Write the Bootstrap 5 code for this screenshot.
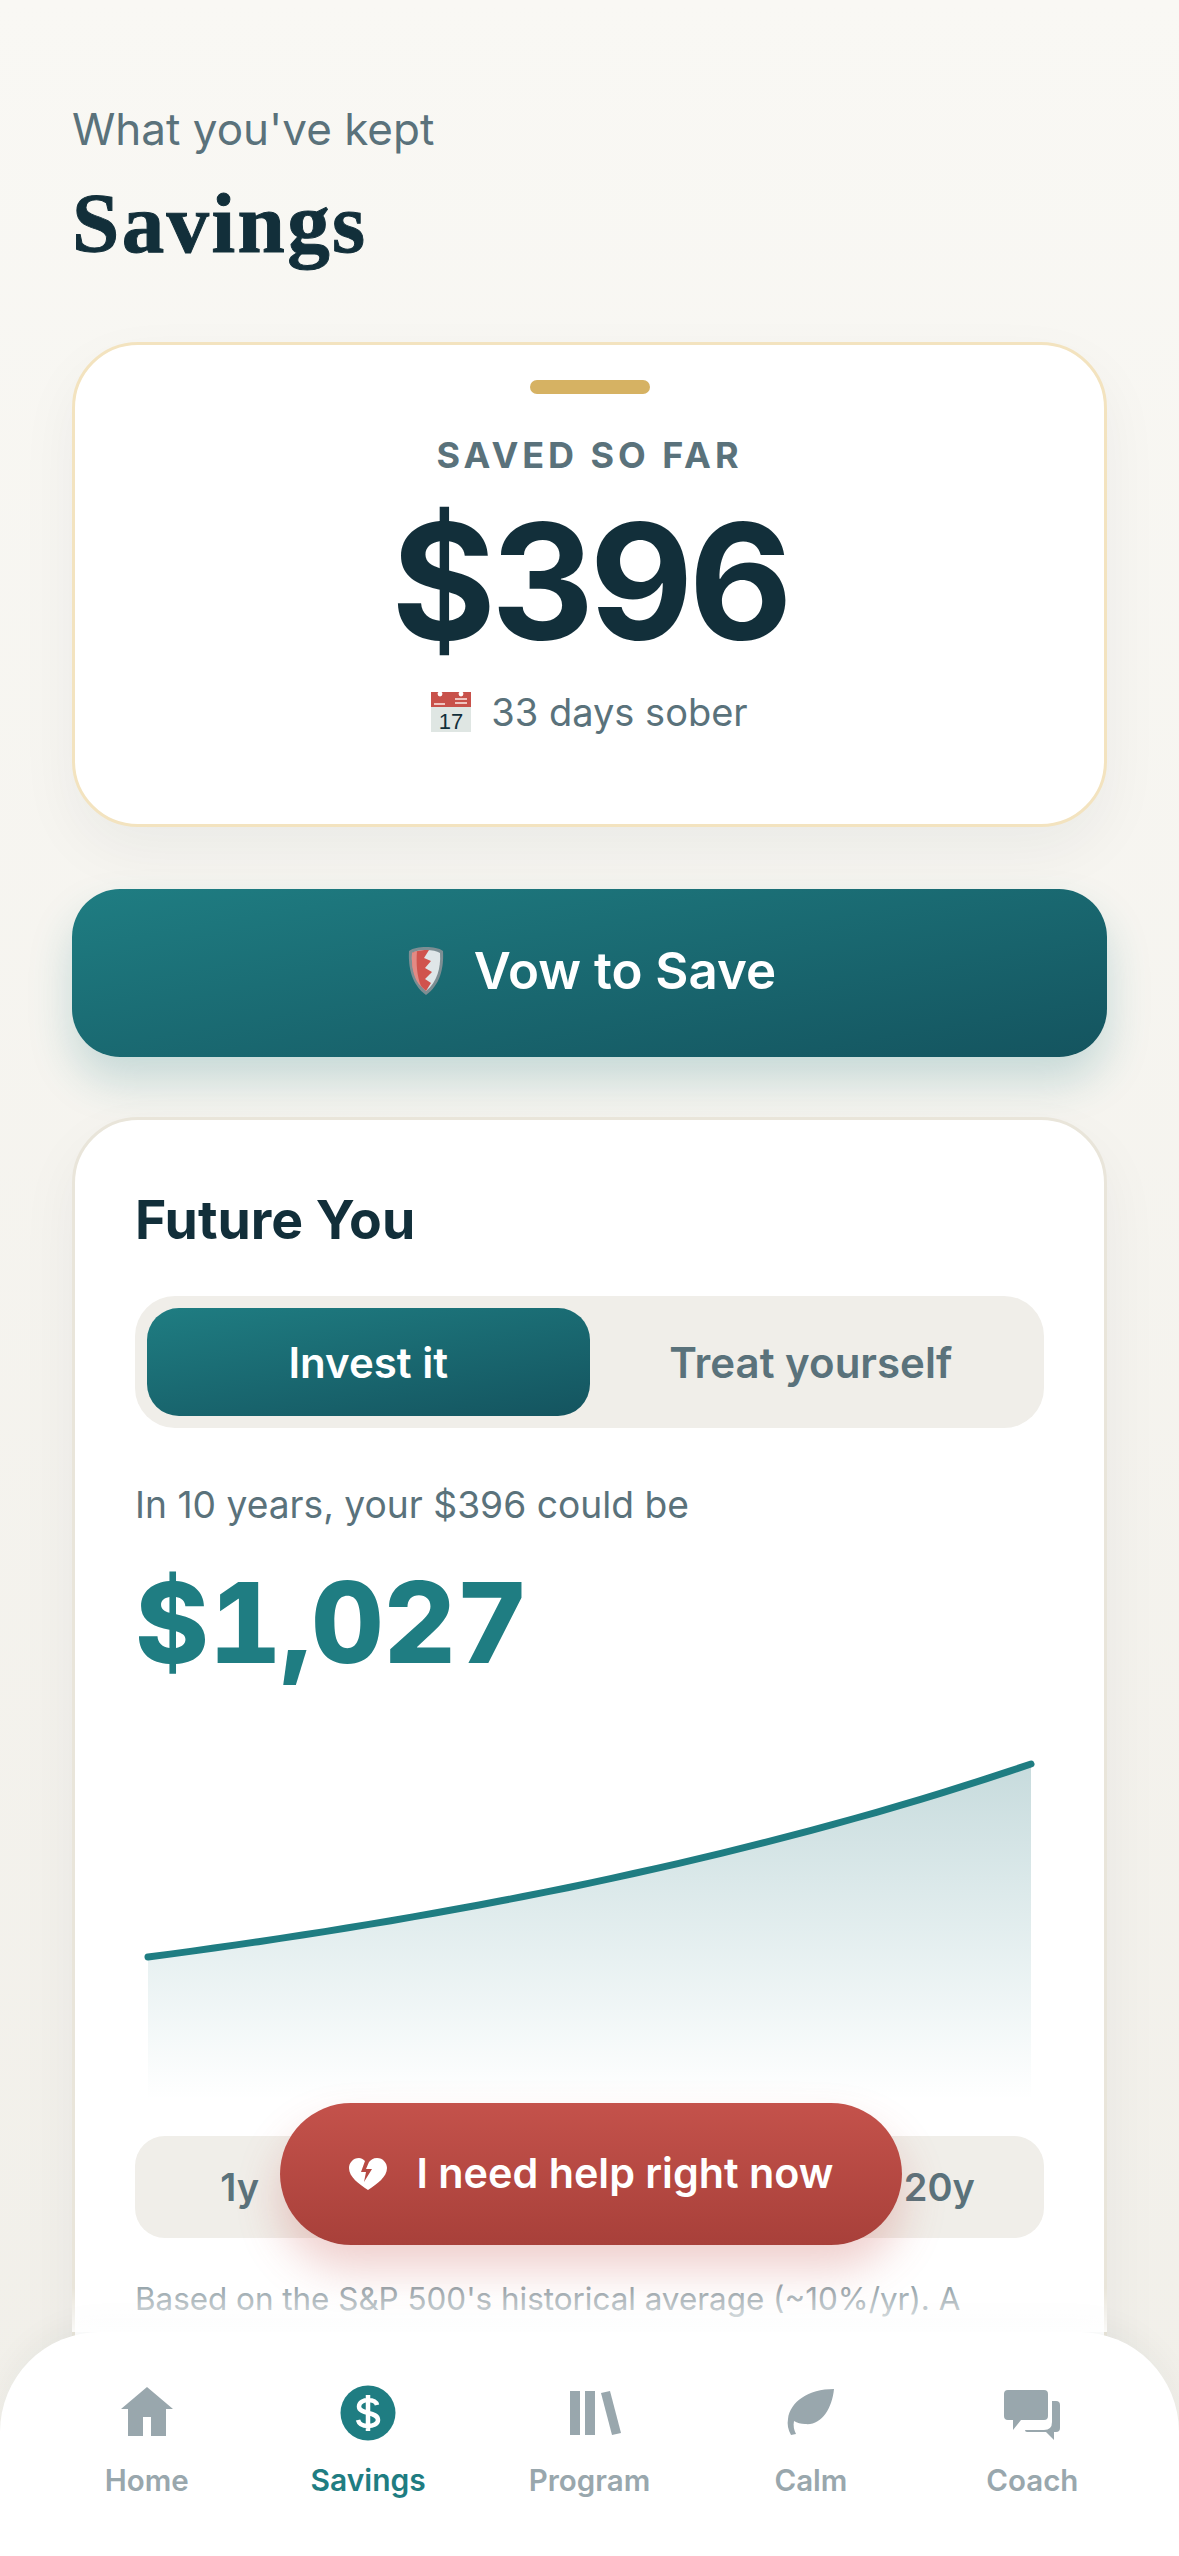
<!DOCTYPE html>
<html lang="en">
<head>
    <meta charset="UTF-8">
    <title>Savings</title>
    <meta name="viewport" content="width=device-width, initial-scale=1">
    <link href="https://cdn.jsdelivr.net/npm/bootstrap@5.3.2/dist/css/bootstrap.min.css" rel="stylesheet">
    <style>
        html, body {
            height: 2556px;
            overflow: hidden;
        }

        body {
            background: linear-gradient(180deg, #f9f8f4 0%, #f1efe9 100%);
            font-family: "Inter", "Liberation Sans", sans-serif;
            color: #122f3a;
        }

        .app-screen {
            position: relative;
            height: 2556px;
            overflow: hidden;
        }

        .page-body {
            padding: 100px 72px 0;
        }

        .eyebrow {
            font-size: 44px;
            line-height: 58px;
            color: #5a727b;
            margin-bottom: 20px;
        }

        .page-title {
            font-family: "Liberation Serif", serif;
            font-weight: 700;
            font-size: 85px;
            line-height: 90px;
            letter-spacing: 2.4px;
            -webkit-text-stroke: 1px #122f3a;
            margin-bottom: 74px;
        }

        .saved-card {
            height: 485px;
            background: #fff;
            border: 3px solid #f3e3bf;
            border-radius: 66px;
            box-shadow: 0 24px 60px rgba(18, 47, 58, .05);
            padding-top: 35px;
            margin-bottom: 62px;
        }

        .gold-handle {
            width: 120px;
            height: 14px;
            border-radius: 7px;
            background: #d6b263;
        }

        .saved-label {
            font-size: 36px;
            line-height: 44px;
            font-weight: 700;
            letter-spacing: .11em;
            color: #5a727b;
            margin-top: 39px;
        }

        .saved-amount {
            font-size: 160px;
            line-height: 180px;
            font-weight: 700;
            letter-spacing: -.03em;
            margin-top: 14px;
        }

        .saved-days {
            font-size: 38px;
            line-height: 50px;
            color: #5a727b;
            gap: 20px;
            margin-top: 16px;
        }

        .vow-btn {
            width: 100%;
            height: 168px;
            border: 0;
            border-radius: 48px;
            padding: 0 0 4px 5px;
            background: linear-gradient(170deg, #1f7d82 0%, #14545f 100%);
            box-shadow: 0 24px 44px rgba(31, 125, 130, .22);
            color: #fff;
            font-size: 51px;
            font-weight: 600;
            gap: 30px;
            margin-bottom: 60px;
        }

        .future-card {
            height: 1500px;
            background: #fff;
            border: 3px solid #e9e5da;
            border-radius: 66px;
            box-shadow: 0 24px 60px rgba(18, 47, 58, .05);
            padding: 68px 60px 0;
        }

        .future-title {
            font-size: 53.500px;
            line-height: 64px;
            font-weight: 700;
            margin-bottom: 44px;
        }

        .mode-toggle {
            height: 132px;
            padding: 12px;
            border-radius: 40px;
            background: #f0eee9;
            margin-bottom: 52px;
        }

        .mode-option {
            flex: 1;
            border-radius: 32px;
            font-size: 42px;
            font-weight: 600;
            color: #5a727b;
        }

        .mode-option.is-on {
            background: linear-gradient(170deg, #1f7d82 0%, #14545f 100%);
            color: #fff;
        }

        .future-caption {
            font-size: 37.200px;
            line-height: 50px;
            color: #5a727b;
            margin-bottom: 27px;
        }

        .future-amount {
            font-size: 112px;
            line-height: 130px;
            font-weight: 800;
            font-variant-numeric: tabular-nums;
            color: #1f7d82;
            margin-bottom: 0;
        }

        .growth-chart {
            display: block;
            width: 908px;
            height: 360px;
            margin-top: 53px;
        }

        .period-row {
            height: 102px;
            border-radius: 30px;
            background: #f0eee9;
            margin-top: 36px;
            margin-bottom: 36px;
        }

        /* the two middle periods sit under the help pill */
        .period-option {
            flex: 1;
            text-align: center;
            font-size: 38px;
            font-weight: 600;
            color: #5a727b;
        }

        .period-option:first-child {
            margin-left: -12px;
        }

        .period-option:last-child {
            margin-right: -12px;
        }

        .foot-note {
            font-size: 31.400px;
            line-height: 50px;
            color: #99a7ad;
            white-space: nowrap;
        }

        .help-pill {
            position: absolute;
            left: 280px;
            top: 2103px;
            width: 622px;
            height: 142px;
            border: 0;
            border-radius: 71px;
            padding-bottom: 6px;
            background: linear-gradient(180deg, #c4524b 0%, #a8403a 100%);
            box-shadow: 0 24px 44px rgba(196, 82, 75, .28);
            color: #fff;
            font-size: 41.300px;
            font-weight: 600;
            gap: 30px;
        }

        .tab-bar {
            position: absolute;
            left: 0;
            right: 0;
            top: 2332px;
            height: 224px;
            background: #fff;
            border-radius: 100px 100px 0 0;
            padding: 51px 36px 0;
            box-shadow: 0 -10px 30px rgba(18, 47, 58, .04);
        }

        .tab-bar::before {
            content: "";
            position: absolute;
            left: 72px;
            right: 72px;
            top: -44px;
            height: 44px;
            background: linear-gradient(180deg, rgba(255, 255, 255, 0), rgba(255, 255, 255, .85));
        }

        .tab-item {
            flex: 1;
            color: #99a7ad;
            font-size: 29.500px;
            font-weight: 600;
        }

        .tab-item.is-on {
            color: #1f7d82;
            font-size: 30px;
        }

        .tab-icon {
            display: block;
            width: 60px;
            height: 60px;
            margin-bottom: 17px;
            fill: currentColor;
            overflow: visible;
        }

        .tab-label {
            line-height: 40px;
        }
    </style>
</head>

<body>

<div class="app-screen">
    <div class="page-body">
        <p class="eyebrow">What you've kept</p>
        <h1 class="page-title">Savings</h1>

        <div class="saved-card d-flex flex-column align-items-center">
            <div class="gold-handle"></div>
            <div class="saved-label">SAVED SO FAR</div>
            <div class="saved-amount">$396</div>
            <div class="saved-days d-flex align-items-center">
                <!-- calendar emoji -->
                <svg width="40" height="40" viewBox="0 0 40 40">
                    <rect width="40" height="40" fill="#dfe6e3"/>
                    <rect width="40" height="15" fill="#c8514a"/>
                    <circle cx="9" cy="2" r="2.4" fill="#fff"/>
                    <circle cx="30" cy="2" r="2.4" fill="#fff"/>
                    <path d="M3 12h11M24 7h12M24 11h12" stroke="#efc4bf" stroke-width="2"/>
                    <text x="20" y="37" text-anchor="middle" font-family="Liberation Sans" font-size="22" fill="#122f3a">17</text>
                </svg>
                <span>33 days sober</span>
            </div>
        </div>

        <button class="vow-btn btn d-flex align-items-center justify-content-center">
            <!-- shield emoji -->
            <svg width="36" height="50" viewBox="0 0 36 50">
                <path d="M18 1 C25 1 31 2 35 5 C36 22 32 39 18 49 C4 39 0 22 1 5 C5 2 11 1 18 1Z" fill="#7d8e93"/>
                <path d="M18 4 C24 4 29 5 32 7 C33 22 29 36 18 45 C7 36 3 22 4 7 C7 5 12 4 18 4Z" fill="#dfe6e8"/>
                <path d="M18 4 C14 4 7 5 4 7 C3 22 7 36 18 45 L23 37 L17 33 L24 26 L17 22 L23 15 L16 12 L21 4Z" fill="#d0534d"/>
                <path d="M4 7 C3 22 7 36 13 40 C9 30 8 18 9 5Z" fill="#e28a84"/>
            </svg>
            <span>Vow to Save</span>
        </button>

        <div class="future-card">
            <h2 class="future-title">Future You</h2>

            <div class="mode-toggle d-flex">
                <div class="mode-option is-on d-flex align-items-center justify-content-center">Invest it</div>
                <div class="mode-option d-flex align-items-center justify-content-center">Treat yourself</div>
            </div>

            <div class="future-caption">In 10 years, your $396 could be</div>
            <div class="future-amount">$1,027</div>

            <svg class="growth-chart" viewBox="0 0 908 360">
                <defs>
                    <linearGradient id="chartFill" x1="0" y1="0" x2="0" y2="1">
                        <stop offset="0" stop-color="#1f6f76" stop-opacity=".25"/>
                        <stop offset="1" stop-color="#1f7d82" stop-opacity="0"/>
                    </linearGradient>
                </defs>
                <path id="chartArea" fill="url(#chartFill)"/>
                <path id="chartLine" fill="none" stroke="#1f7d82" stroke-width="7" stroke-linecap="round"/>
            </svg>

            <div class="period-row d-flex align-items-center">
                <div class="period-option">1y</div>
                <div class="period-option"></div>
                <div class="period-option"></div>
                <div class="period-option">20y</div>
            </div>

            <p class="foot-note">Based on the S&amp;P 500's historical average (~10%/yr). A</p>
        </div>
    </div>

    <button class="help-pill btn d-flex align-items-center justify-content-center">
        <svg width="38" height="32" viewBox="0 0 38 32" fill="#fff">
            <path d="M10 0 C4 0 0 5 0 10 C0 19 10 26 19 32 C28 26 38 19 38 10 C38 5 34 0 28 0 C24 0 22 2 20 4 L17 11 L23 11 L15 24 L17 14 L12 14 L16 3 C14 1 12 0 10 0Z"/>
        </svg>
        <span>I need help right now</span>
    </button>

    <nav class="tab-bar d-flex">
        <div class="tab-item d-flex flex-column align-items-center">
            <svg class="tab-icon" viewBox="0 0 60 60"><path d="M30 4 L56 26 H49 V53 H34 V34 H26 V53 H11 V26 H4Z"/></svg>
            <span class="tab-label">Home</span>
        </div>
        <div class="tab-item is-on d-flex flex-column align-items-center">
            <svg class="tab-icon" viewBox="0 0 60 60">
                <circle cx="30" cy="30" r="27.5"/>
                <path d="M39 22 C38 18 34 17 30 17 C26 17 21 19 21 23.5 C21 32 40 28 40 37 C40 41 35 43 30 43 C25 43 21 41 20 37 M30 12 V48" fill="none" stroke="#fff" stroke-width="4.5"/>
            </svg>
            <span class="tab-label">Savings</span>
        </div>
        <div class="tab-item d-flex flex-column align-items-center">
            <svg class="tab-icon" viewBox="0 0 60 60">
                <rect x="10" y="8" width="10" height="44"/>
                <rect x="25" y="8" width="10" height="44"/>
                <path d="M41 10 L50 8 L61 50 L52 52Z"/>
            </svg>
            <span class="tab-label">Program</span>
        </div>
        <div class="tab-item d-flex flex-column align-items-center">
            <svg class="tab-icon" viewBox="0 0 60 60">
                <path d="M53 6 C51 26 40 43 24 41 C20 41 16 40 13 38 C12 43 13 47 15 51 L10 52 C7 47 6 41 7 36 C9 19 27 6 53 6Z"/>
            </svg>
            <span class="tab-label">Calm</span>
        </div>
        <div class="tab-item d-flex flex-column align-items-center">
            <svg class="tab-icon" viewBox="0 0 60 60">
                <path d="M6 7 H42 Q46 7 46 11 V33 Q46 37 42 37 H19 L11 47 V37 H6 Q2 37 2 33 V11 Q2 7 6 7Z"/>
                <path d="M50 18 H54 Q58 18 58 22 V45 Q58 49 54 49 H52 V57 L44 49 H25 Q23 49 23 47 H42 Q50 47 50 39Z"/>
            </svg>
            <span class="tab-label">Coach</span>
        </div>
    </nav>
</div>

<script>
    // growth curve at 10%/yr over 10 years
    var pts = [];
    for (var i = 0; i <= 40; i++) {
        var t = i / 40;
        var x = 13 + t * 883;
        var y = 217 - 193 * (Math.pow(1.1, t * 10) - 1) / (Math.pow(1.1, 10) - 1);
        pts.push(x.toFixed(1) + ' ' + y.toFixed(1));
    }
    var line = 'M' + pts.join(' L');
    document.getElementById('chartLine').setAttribute('d', line);
    document.getElementById('chartArea').setAttribute('d', line + ' L896 360 L13 360 Z');
</script>
<script src="https://cdn.jsdelivr.net/npm/bootstrap@5.3.2/dist/js/bootstrap.bundle.min.js"></script>

</body>
</html>
